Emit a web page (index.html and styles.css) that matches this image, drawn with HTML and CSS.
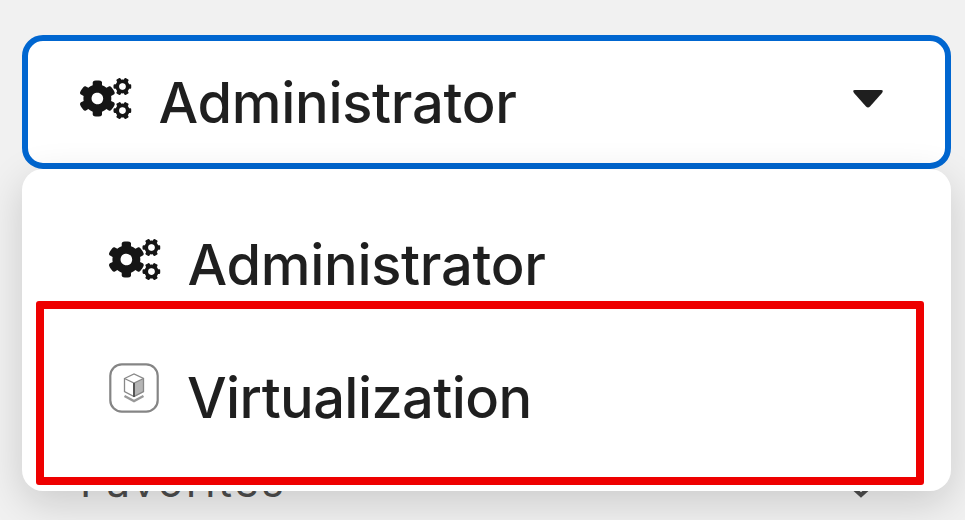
FILE: index.html
```html
<!DOCTYPE html>
<html lang="en">
<head>
<meta charset="utf-8">
<title>Perspective switcher</title>
<link rel="stylesheet" href="styles.css">
</head>
<body>
<svg class="defs" aria-hidden="true">
  <symbol id="cogs" viewBox="0 0 640 512">
    <path id="small-cog" d="M512.1 191l-8.2 14.3c-3 5.3-9.4 7.5-15.1 5.4-11.8-4.4-22.6-10.7-32.1-18.6-4.6-3.8-5.8-10.5-2.8-15.7l8.2-14.3c-6.9-8-12.3-17.3-15.9-27.4h-16.5c-6 0-11.2-4.3-12.2-10.3-2-12-2.1-24.6 0-37.1 1-6 6.2-10.4 12.2-10.4h16.5c3.6-10.1 9-19.4 15.9-27.4l-8.2-14.3c-3-5.2-1.9-11.9 2.8-15.7 9.5-7.9 20.4-14.2 32.1-18.6 5.7-2.1 12.1.1 15.1 5.4l8.2 14.3c10.5-1.9 21.2-1.9 31.7 0L552 6.3c3-5.3 9.4-7.5 15.1-5.4 11.8 4.4 22.6 10.7 32.1 18.6 4.6 3.8 5.8 10.5 2.8 15.7l-8.2 14.3c6.9 8 12.3 17.3 15.9 27.4h16.5c6 0 11.2 4.3 12.2 10.3 2 12 2.1 24.6 0 37.1-1 6-6.2 10.4-12.2 10.4h-16.5c-3.6 10.1-9 19.4-15.9 27.4l8.2 14.3c3 5.2 1.9 11.9-2.8 15.7-9.5 7.9-20.4 14.2-32.1 18.6-5.7 2.1-12.1-.1-15.1-5.4l-8.2-14.3c-10.4 1.9-21.2 1.9-31.7 0zm-10.5-58.8c38.5 29.6 82.4-14.3 52.8-52.8-38.5-29.7-82.4 14.3-52.8 52.8z"/>
    <use href="#small-cog" y="299"/>
    <circle class="hole" cx="528" cy="106" r="41"/>
    <circle class="hole" cx="528" cy="405" r="41"/>
    <path d="M386.3 286.1l33.7 16.8c10.1 5.8 14.5 18.1 10.5 29.1-8.9 24.2-26.4 46.4-42.6 65.8-7.4 8.9-20.2 11.1-30.3 5.3l-29.1-16.8c-16 13.7-34.6 24.6-54.9 31.7v33.6c0 11.6-8.3 21.6-19.7 23.6-24.6 4.2-50.4 4.4-75.9 0-11.5-2-20-11.9-20-23.6V418c-20.3-7.2-38.9-18-54.9-31.7L74 403c-10 5.8-22.9 3.6-30.3-5.3-16.2-19.4-33.3-41.6-42.2-65.7-4-10.9.4-23.2 10.5-29.1l33.3-16.8c-3.9-20.9-3.9-42.4 0-63.4L12 205.8c-10.1-5.8-14.6-18.1-10.5-29 8.9-24.2 26-46.4 42.2-65.8 7.4-8.9 20.2-11.1 30.3-5.3l29.1 16.8c16-13.7 34.6-24.6 54.9-31.7V57.1c0-11.5 8.2-21.5 19.6-23.5 24.6-4.2 50.5-4.4 76-.1 11.5 2 20 11.9 20 23.6v33.6c20.3 7.2 38.9 18 54.9 31.7l29.1-16.8c10-5.8 22.9-3.6 30.3 5.3 16.2 19.4 33.2 41.6 42.1 65.8 4 10.9.1 23.2-10 29.1l-33.7 16.8c3.9 21 3.9 42.5 0 63.5zm-117.6 21.1c59.2-77-28.7-164.9-105.7-105.7-59.2 77 28.7 164.9 105.7 105.7z"/>
  </symbol>
</svg>
<aside class="sidebar">
  <button class="toggle" type="button">
    <svg class="cogs"><use href="#cogs"/></svg>
    <span class="label admin">Administrator</span>
    <svg class="caret" viewBox="0 0 30 18"><path d="M2 0H28Q31 0 29 3L17 16.500Q15 18.500 13 16.500L1 3Q-1 0 2 0Z"/></svg>
  </button>
  <nav class="nav">
    <span class="nav-title">Favorites</span>
    <svg class="chevron" viewBox="0 0 24 14"><path d="M2 2L12 11L22 2"/></svg>
  </nav>
  <ul class="menu">
    <li class="item">
      <svg class="cogs"><use href="#cogs"/></svg>
      <span class="label admin">Administrator</span>
    </li>
    <li class="item highlighted">
      <svg class="cube" viewBox="0 0 50 50">
        <rect class="frame" x="1.300" y="1.300" width="47.400" height="47.400" rx="11.500"/>
        <path class="side" d="M25 20L35 15.500V29L25 34Z"/>
        <path class="edge" d="M15.500 15.500L25 11L34.500 15.500V28.500L25 33.500L15.500 28.500ZM15.500 15.500L25 20L34.500 15.500"/>
        <path class="spine" d="M25 20V34"/>
        <path class="base" d="M15.500 33L25 38L34.500 33"/>
      </svg>
      <span class="label virt">Virtualization</span>
    </li>
  </ul>
</aside>
</body>
</html>
```

FILE: styles.css
```css
* { box-sizing: border-box; }
body {
  margin: 0;
  height: 520px;
  overflow: hidden;
  background: #f1f1f1;
  color: #1f1f1f;
  font-family: Inter, "Liberation Sans", sans-serif;
}
.defs { position: absolute; width: 0; height: 0; }
.sidebar {
  position: relative;
  height: 520px;
  padding: 35px 14px 0 22px;
}
.toggle {
  display: flex;
  align-items: center;
  width: 100%;
  height: 134px;
  padding: 0 62px 6px 52px;
  border: 6px solid #0066d0;
  border-radius: 21px;
  background: #fff;
  color: inherit;
  font-family: inherit;
}
.cogs { width: 51.5px; height: 41.2px; flex: none; fill: #151515; }
.hole { fill: #fff; }
.label {
  margin-left: 27px;
  font-size: 56px;
  line-height: 68px;
  font-weight: 500;
  letter-spacing: -.3px;
  white-space: nowrap;
}
.admin { padding-top: 7px; }
.item .admin { padding-top: 9px; }
.virt { padding-top: 20px; margin-left: 28px; letter-spacing: -.6px; }
.caret { width: 30px; height: 18px; margin-left: auto; fill: #1f1f1f; }
.nav {
  display: flex;
  align-items: center;
  justify-content: space-between;
  padding: 288px 78px 0 58px;
}
.nav-title {
  font-size: 42px;
  line-height: 50px;
  letter-spacing: 2.8px;
  color: #4d4d4d;
}
.chevron { width: 24px; height: 14px; margin-top: 18px; fill: none; stroke: #4d4d4d; stroke-width: 4; }
.menu {
  position: absolute;
  top: 169px;
  left: 22px;
  right: 14px;
  height: 322px;
  margin: 0;
  padding: 50px 27px 0 14px;
  list-style: none;
  border-radius: 21px;
  background: #fff;
  box-shadow: 0 12px 40px rgba(0, 0, 0, .16);
}
.item {
  display: flex;
  align-items: center;
  height: 83px;
  padding: 0 0 1px 73px;
}
.highlighted {
  height: 184px;
  margin-top: -1px;
  padding: 0 0 11px 65px;
  border: 8px solid #ee0000;
  border-radius: 3px;
}
.cube { width: 50px; height: 50px; flex: none; fill: none; stroke: #777; }
.frame { stroke-width: 2.2; stroke: #858585; }
.side { fill: #b5b5b5; stroke: none; }
.edge { stroke-width: 1.3; stroke: #888; }
.spine { stroke-width: 2; stroke: #555; }
.base { stroke-width: 2.5; stroke: #999; }
```
